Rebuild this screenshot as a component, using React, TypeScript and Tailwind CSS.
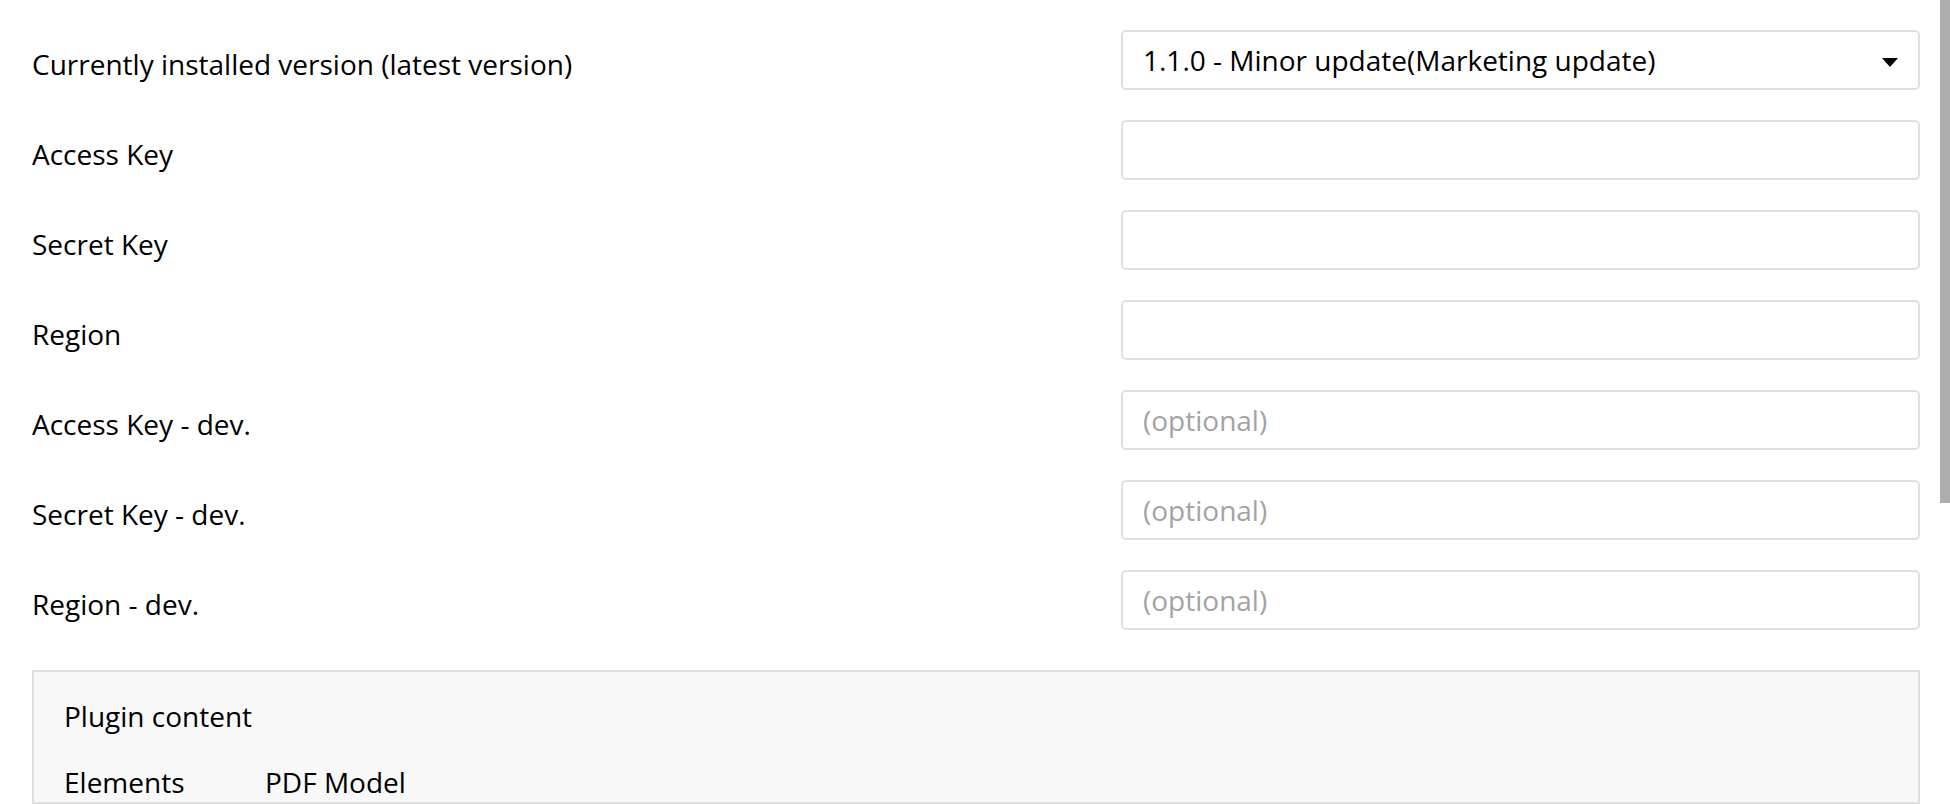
import React from "react";

const rows: { label: string; value?: string; placeholder?: string; select?: boolean }[] = [
  { label: "Currently installed version (latest version)", value: "1.1.0 - Minor update(Marketing update)", select: true },
  { label: "Access Key" },
  { label: "Secret Key" },
  { label: "Region" },
  { label: "Access Key - dev.", placeholder: "(optional)" },
  { label: "Secret Key - dev.", placeholder: "(optional)" },
  { label: "Region - dev.", placeholder: "(optional)" },
];

export default function App() {
  return (
    <div
      className="flex h-[804px] w-[1950px] overflow-hidden bg-white text-black"
      style={{ fontFamily: '"Open Sans", "Noto Sans", sans-serif' }}
    >
      <div className="flex w-[1940px] flex-col pl-[32px] pr-[20px] pt-[30px]">
        <div className="flex flex-col gap-[30px]">
          {rows.map((r) => (
            <div key={r.label} className="flex h-[60px] items-center">
              <div className="flex-1 pt-[7px] text-[28px] leading-[38px]">{r.label}</div>
              <div className="flex h-[60px] w-[799px] items-center rounded-[5px] border-2 border-[#e0e0e0] bg-white pl-[20px] pr-[20px] text-[28px] leading-[38px]">
                {r.select ? (
                  <>
                    <span className="flex-1">{r.value}</span>
                    <svg width="16" height="9" viewBox="0 0 16 9" className="mt-[4px]">
                      <path d="M0 0 L16 0 L8 9 Z" fill="#000" />
                    </svg>
                  </>
                ) : (
                  <span className="text-[#a3a3a3]">{r.placeholder ?? ""}</span>
                )}
              </div>
            </div>
          ))}
        </div>
        <div className="mt-[40px] flex h-[300px] flex-col border-2 border-[#dedede] bg-[#f8f8f8] pl-[30px] pt-[25px] text-[28px] leading-[38px]">
          <div>Plugin content</div>
          <div className="mt-[28px] flex">
            <div className="w-[201px]">Elements</div>
            <div>PDF Model</div>
          </div>
        </div>
      </div>
      <div className="flex w-[10px] flex-col bg-white">
        <div className="h-[503px] w-[10px] bg-[#adadad]" />
      </div>
    </div>
  );
}
